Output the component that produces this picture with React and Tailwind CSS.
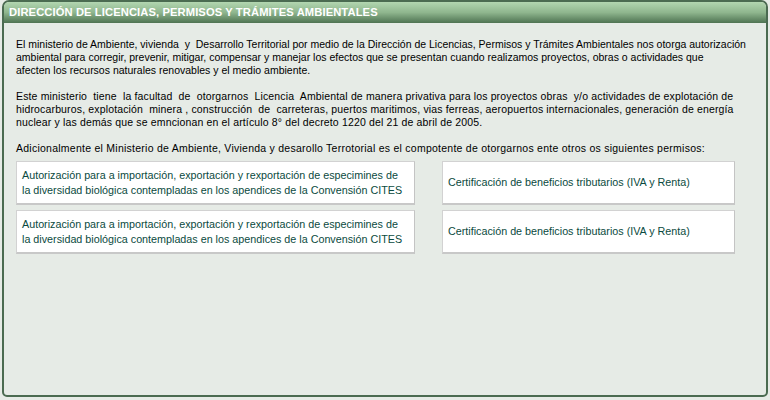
import React from "react";

const leftText = (
  <>
    Autorización para a importación, exportación y rexportación de especimines de
    <br />
    la diversidad biológica contempladas en los apendices de la Convensión CITES
  </>
);

const boxes = [
  { left: leftText, right: "Certificación de beneficios tributarios (IVA y Renta)" },
  { left: leftText, right: "Certificación de beneficios tributarios (IVA y Renta)" },
];

const PermitBox = ({ text, wide }) => (
  <div
    className={`${wide ? "w-[399px]" : "w-[293px]"} h-[44px] bg-white border border-[#d2d2d2] border-r-[#c4c4c4] border-b-2 border-b-[#c8c8c8] flex items-center px-[5px] text-[#0a4a40] text-[10.75px] leading-[15px] whitespace-nowrap`}
  >
    <div>{text}</div>
  </div>
);

export default function App() {
  return (
    <div className="w-[770px] h-[400px] bg-[#e6ebe6] pl-[2px] font-['Tahoma','Liberation_Sans',sans-serif]">
      <div className="w-[766px] h-[397px] border-2 border-[#4b6b51] rounded-t-[7px] rounded-b-[5px] flex flex-col overflow-hidden">
        <div className="h-[21px] bg-gradient-to-b from-[#b2d6b0] via-[#8fb68e] to-[#4f7453] flex items-center px-[5px]">
          <h1 className="text-white font-bold text-[11.2px] tracking-[0.1px]">
            DIRECCIÓN DE LICENCIAS, PERMISOS Y TRÁMITES AMBIENTALES
          </h1>
        </div>
        <div className="pl-[12px] pr-[4px] pt-[15px] text-[10.5px] leading-[13px] text-black whitespace-nowrap">
          <p>
            El ministerio de Ambiente, vivienda&nbsp; y&nbsp; Desarrollo Territorial por medio de la Dirección de Licencias, Permisos y Trámites Ambientales nos otorga autorización
            <br />
            ambiental para corregir, prevenir, mitigar, compensar y manejar los efectos que se presentan cuando realizamos proyectos, obras o actividades que
            <br />
            afecten los recursos naturales renovables y el medio ambiente.
          </p>
          <p className="mt-[13px] tracking-[0.15px]">
            Este ministerio&nbsp; tiene&nbsp; la facultad&nbsp; de&nbsp; otorgarnos&nbsp; Licencia&nbsp; Ambiental de manera privativa para los proyectos obras&nbsp; y/o actividades de explotación de
            <br />
            hidrocarburos, explotación&nbsp; minera , construcción&nbsp; de&nbsp; carreteras, puertos maritimos, vias ferreas, aeropuertos internacionales, generación de energía
            <br />
            nuclear y las demás que se emncionan en el artículo 8° del decreto 1220 del 21 de abril de 2005.
          </p>
          <p className="mt-[13px] tracking-[0.25px]">
            Adicionalmente el Ministerio de Ambiente, Vivienda y desarollo Terrotorial es el compotente de otorgarnos ente otros os siguientes permisos:
          </p>
          <div className="mt-[6px] flex flex-col gap-[5px]">
            {boxes.map((b, i) => (
              <div key={i} className="flex gap-[27px]">
                <PermitBox text={b.left} wide />
                <PermitBox text={b.right} />
              </div>
            ))}
          </div>
        </div>
      </div>
    </div>
  );
}
